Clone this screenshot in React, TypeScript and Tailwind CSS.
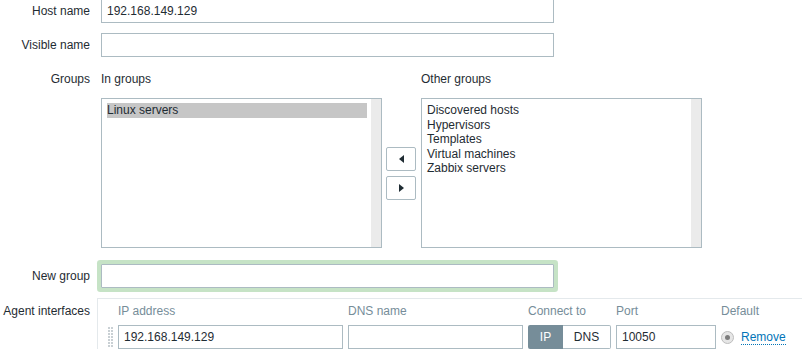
import React from "react";

const FONT = { fontFamily: '"Liberation Sans", Arial, sans-serif' };

function Label({ children, className = "" }: { children: React.ReactNode; className?: string }) {
  return (
    <div className={"w-[90px] shrink-0 text-right text-[12px] leading-[14px] text-[#1f2c33] " + className}>
      {children}
    </div>
  );
}

function TextInput({ value = "", className = "" }: { value?: string; className?: string }) {
  return (
    <div
      className={
        "h-[24px] border border-[#acbbc2] bg-white px-[5px] text-[12px] leading-[22px] text-[#1f2c33] " + className
      }
    >
      {value}
    </div>
  );
}

function ListBox({ items, selected }: { items: string[]; selected?: number }) {
  return (
    <div className="flex h-[150px] w-[281px] border border-[#acbbc2] bg-white">
      <div className="flex-1 pl-[5px] pr-[4px] pt-[4px]">
        {items.map((it, i) => (
          <div
            key={it}
            className={
              "h-[14.5px] text-[12px] leading-[14.5px] text-[#1f2c33] " + (i === selected ? "bg-[#c6c6c6]" : "")
            }
          >
            {it}
          </div>
        ))}
      </div>
      <div className="w-[10px] bg-[#ebebeb]" />
    </div>
  );
}

function ArrowButton({ dir }: { dir: "left" | "right" }) {
  return (
    <button className="flex h-[24px] w-[30px] items-center justify-center rounded-[2px] border border-[#acbbc2] bg-white">
      <svg width="5" height="8" viewBox="0 0 5 8">
        {dir === "left" ? <polygon points="5,0 5,8 0,4" fill="#1f2c33" /> : <polygon points="0,0 0,8 5,4" fill="#1f2c33" />}
      </svg>
    </button>
  );
}

function DragHandle() {
  const dots = [];
  for (let y = 0; y < 7; y++) {
    dots.push(<rect key={"a" + y} x={0} y={y * 3} width={2} height={2} fill="#c9d0d4" />);
    dots.push(<rect key={"b" + y} x={3} y={y * 3} width={2} height={2} fill="#c9d0d4" />);
  }
  return (
    <svg width="5" height="20" viewBox="0 0 5 20" className="mt-[2px]">
      {dots}
    </svg>
  );
}

export default function App() {
  return (
    <div className="flex h-[349px] w-[802px] flex-col overflow-hidden bg-white" style={FONT}>
      {/* Host name */}
      <div className="-mt-px flex items-center gap-[11px]">
        <Label>Host name</Label>
        <TextInput value="192.168.149.129" className="w-[453px]" />
      </div>

      {/* Visible name */}
      <div className="mt-[10px] flex items-center gap-[11px]">
        <Label>Visible name</Label>
        <TextInput className="w-[453px]" />
      </div>

      {/* Groups */}
      <div className="mt-[15px] flex gap-[11px]">
        <Label>Groups</Label>
        <div className="flex items-center">
          <div className="flex flex-col">
            <div className="text-[12px] leading-[14px] text-[#1f2c33]">In groups</div>
            <div className="mt-[12px]">
              <ListBox items={["Linux servers"]} selected={0} />
            </div>
          </div>
          <div className="ml-[4px] mr-[5px] mt-[26px] flex flex-col gap-[5px]">
            <ArrowButton dir="left" />
            <ArrowButton dir="right" />
          </div>
          <div className="flex flex-col">
            <div className="text-[12px] leading-[14px] text-[#1f2c33]">Other groups</div>
            <div className="mt-[12px]">
              <ListBox items={["Discovered hosts", "Hypervisors", "Templates", "Virtual machines", "Zabbix servers"]} />
            </div>
          </div>
        </div>
      </div>

      {/* New group */}
      <div className="mt-[16px] flex items-center gap-[11px]">
        <Label>New group</Label>
        <TextInput className="w-[453px] rounded-[1px] ring-4 ring-[#c6e3c6]" />
      </div>

      {/* Agent interfaces */}
      <div className="mt-[10px] flex gap-[7px]">
        <Label className="pt-[6px]">Agent interfaces</Label>
        <div className="flex-1 border-l border-t border-[#e4e9ec] pt-[5px]">
          <div className="flex text-[12px] leading-[14px] text-[#768d99]">
            <div className="ml-[20px] w-[230px]">IP address</div>
            <div className="w-[180px]">DNS name</div>
            <div className="w-[88px]">Connect to</div>
            <div className="w-[105px]">Port</div>
            <div>Default</div>
          </div>
          <div className="mt-[7px] flex items-start gap-[5px] pl-[10px]">
            <DragHandle />
            <TextInput value="192.168.149.129" className="w-[225px]" />
            <TextInput className="w-[175px]" />
            <div className="flex h-[24px] w-[83px] text-[12px]">
              <div className="flex w-[35px] items-center justify-center rounded-l-[2px] bg-[#768d99] text-white">IP</div>
              <div className="flex flex-1 items-center justify-center rounded-r-[2px] border border-l-0 border-[#acbbc2] bg-white text-[#1f2c33]">
                DNS
              </div>
            </div>
            <TextInput value="10050" className="w-[100px]" />
            <div className="flex h-[24px] items-center gap-[7px]">
              <div className="flex h-[13px] w-[13px] items-center justify-center rounded-full border border-[#bdbdbd] bg-[#e6e6e6]">
                <div className="h-[5px] w-[5px] rounded-full bg-[#7d7d7d]" />
              </div>
              <span className="border-b border-dotted border-[#0275b8] text-[12px] leading-[14px] text-[#0275b8]">
                Remove
              </span>
            </div>
          </div>
        </div>
      </div>
    </div>
  );
}
